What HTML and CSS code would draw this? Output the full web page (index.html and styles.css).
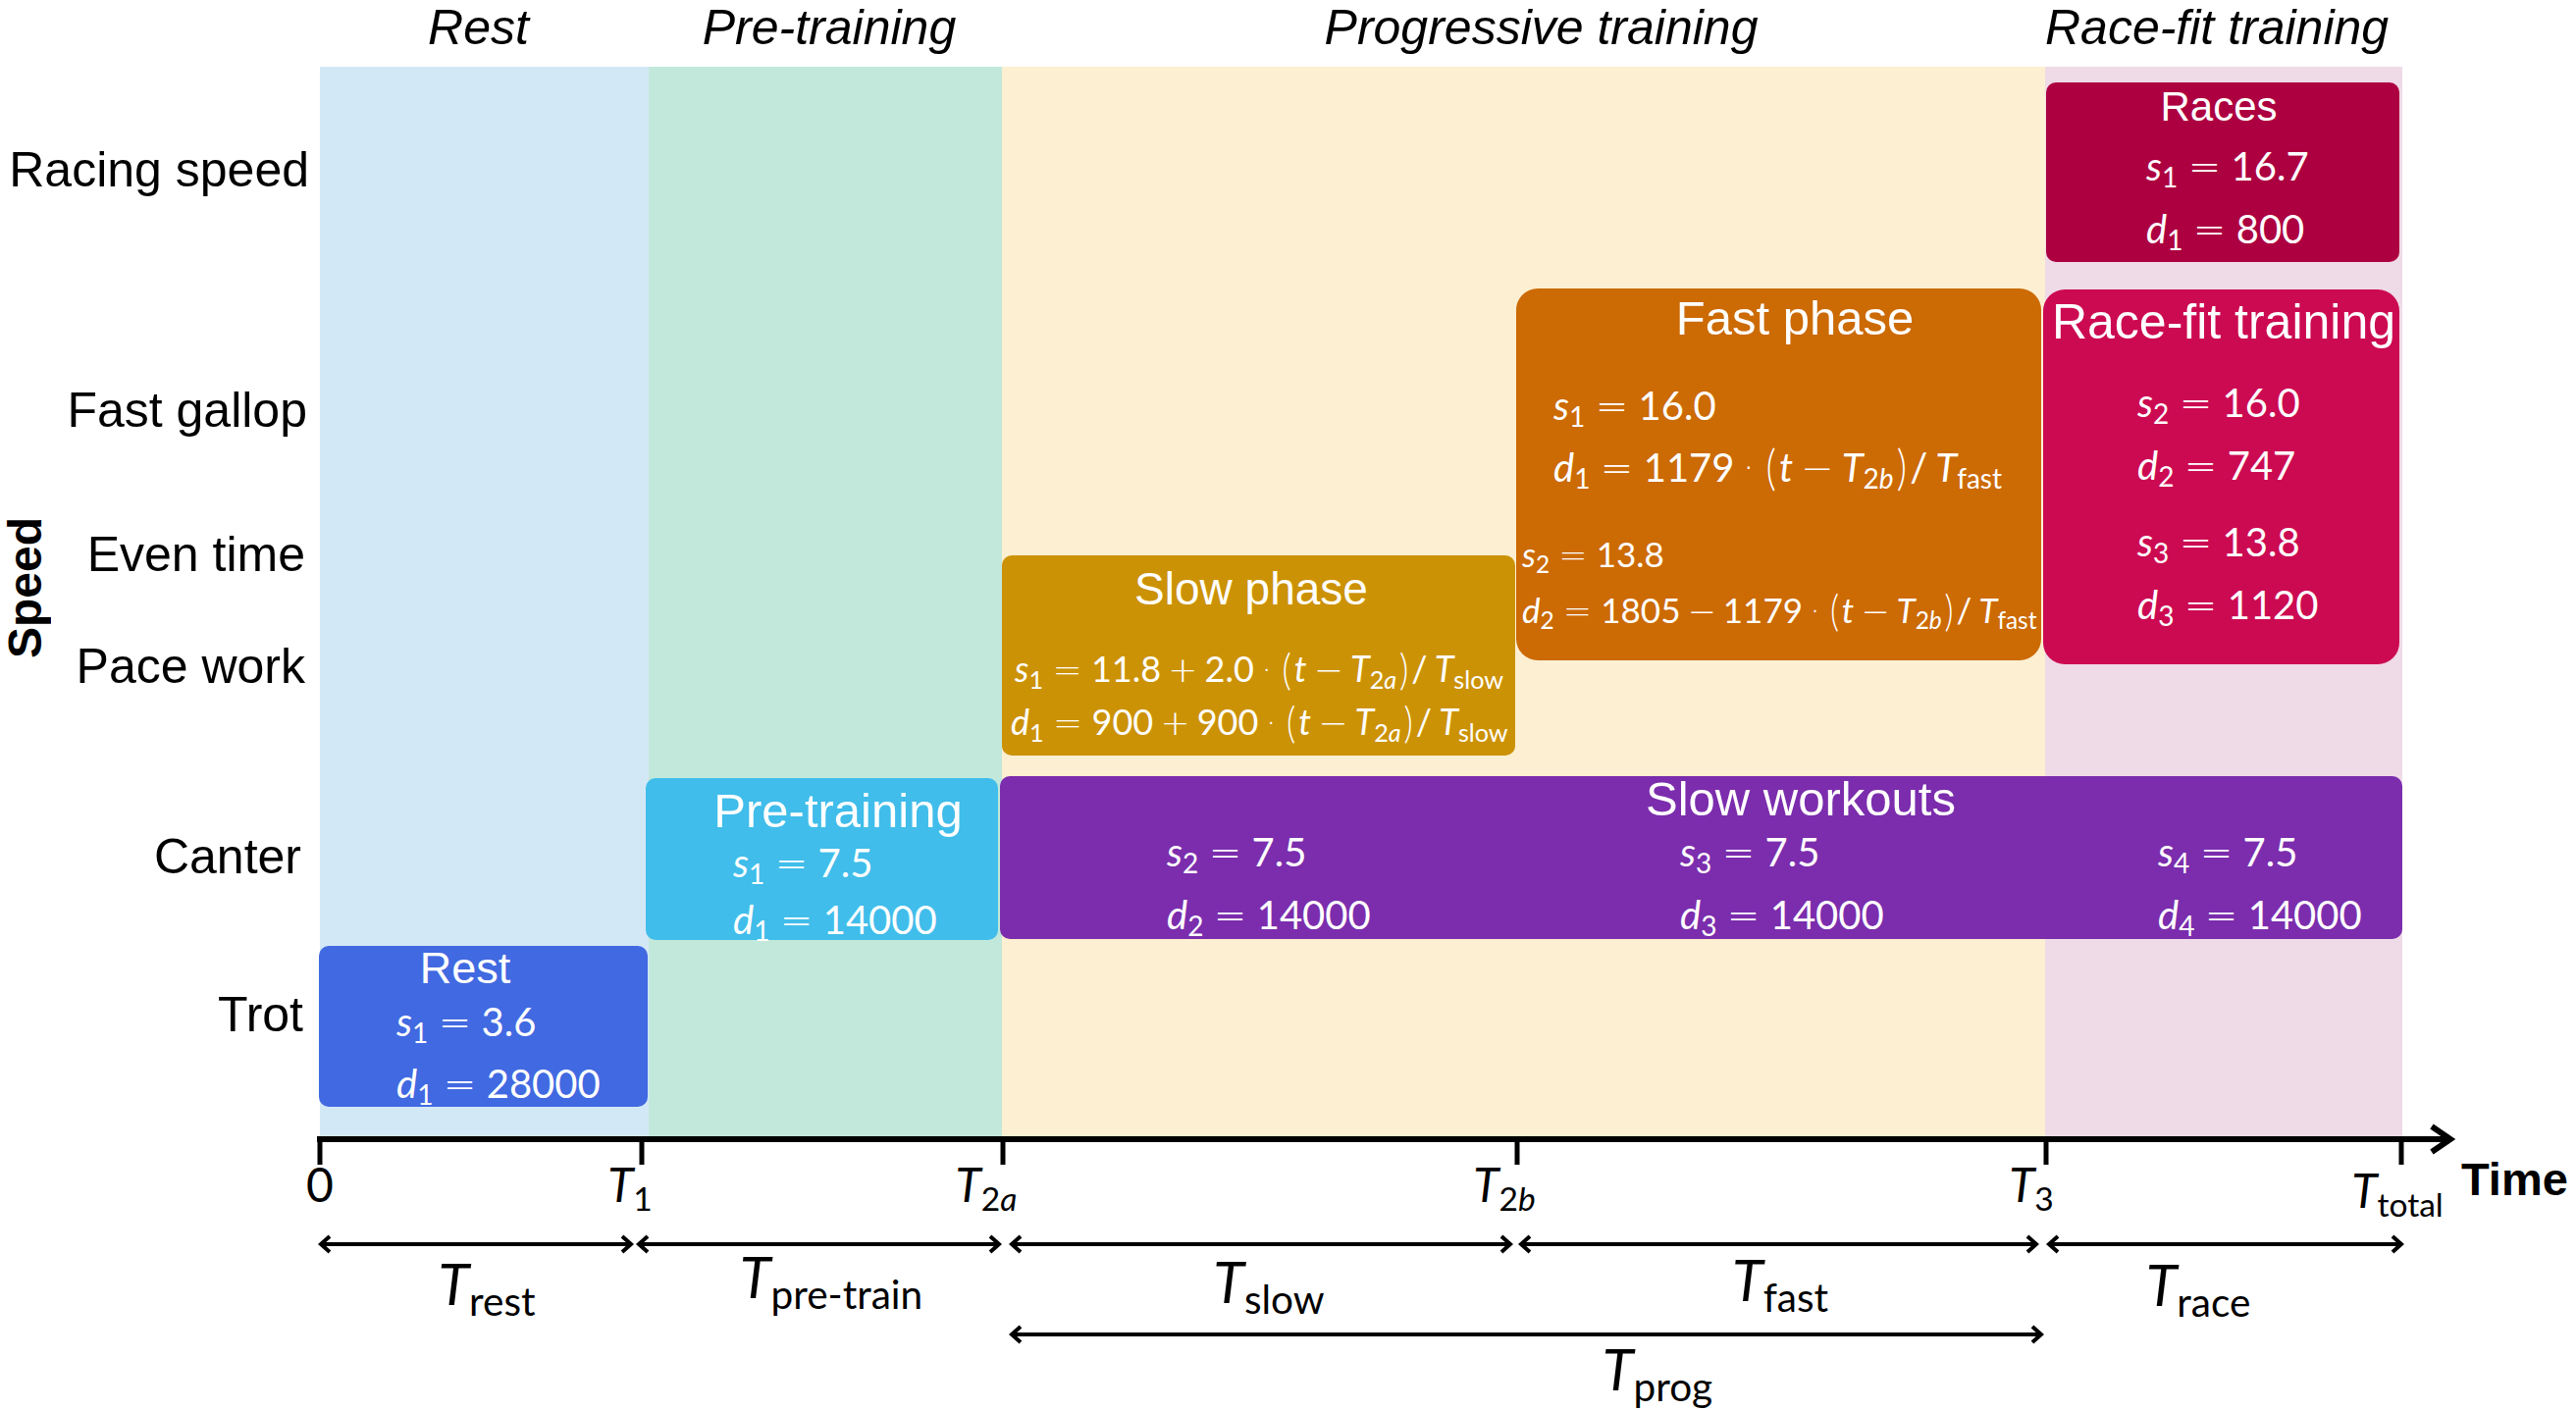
FILE: index.html
```html
<!DOCTYPE html>
<html lang="en">
<head>
<meta charset="utf-8">
<title>Training phases</title>
<link rel="stylesheet" href="styles.css">
</head>
<body>
<div class="figure">
  <div class="phase-titles">
    <div class="pt pt-rest">Rest</div>
    <div class="pt pt-pre">Pre-training</div>
    <div class="pt pt-prog">Progressive training</div>
    <div class="pt pt-race">Race-fit training</div>
  </div>

  <div class="yaxis">
    <div class="yaxis-title">Speed</div>
    <div class="ytick yt-racing">Racing speed</div>
    <div class="ytick yt-fast">Fast gallop</div>
    <div class="ytick yt-even">Even time</div>
    <div class="ytick yt-pace">Pace work</div>
    <div class="ytick yt-canter">Canter</div>
    <div class="ytick yt-trot">Trot</div>
  </div>

  <div class="plot">
    <div class="bands">
      <div class="band band-rest"></div>
      <div class="band band-pre"></div>
      <div class="band band-prog"></div>
      <div class="band band-race"></div>
    </div>

    <div class="box box-rest">
      <div class="bt">Rest</div>
      <div class="m"><i>s</i><sub>1</sub><span class="op">=</span>3.6</div>
      <div class="m"><i>d</i><sub>1</sub><span class="op">=</span>28000</div>
    </div>

    <div class="box box-pre">
      <div class="bt">Pre-training</div>
      <div class="m"><i>s</i><sub>1</sub><span class="op">=</span>7.5</div>
      <div class="m"><i>d</i><sub>1</sub><span class="op">=</span>14000</div>
    </div>

    <div class="box box-slow">
      <div class="bt">Slow phase</div>
      <div class="m m-first"><i>s</i><sub>1</sub><span class="op">=</span>11.8<span class="bin">+</span>2.0<span class="dot">·</span><span class="pr">(</span><i>t</i><span class="bin">−</span><i>T</i><sub>2<i>a</i></sub><span class="pr">)</span>/<i class="sl">T</i><sub>slow</sub></div>
      <div class="m m-d"><i>d</i><sub>1</sub><span class="op">=</span>900<span class="bin">+</span>900<span class="dot">·</span><span class="pr">(</span><i>t</i><span class="bin">−</span><i>T</i><sub>2<i>a</i></sub><span class="pr">)</span>/<i class="sl">T</i><sub>slow</sub></div>
    </div>

    <div class="box box-fast">
      <div class="bt">Fast phase</div>
      <div class="m m-first"><i>s</i><sub>1</sub><span class="op">=</span>16.0</div>
      <div class="m"><i>d</i><sub>1</sub><span class="op">=</span>1179<span class="dot">·</span><span class="pr">(</span><i>t</i><span class="bin">−</span><i>T</i><sub>2<i>b</i></sub><span class="pr">)</span>/<i class="sl">T</i><sub>fast</sub></div>
      <div class="m m-small m-small-first"><i>s</i><sub>2</sub><span class="op">=</span>13.8</div>
      <div class="m m-small"><i>d</i><sub>2</sub><span class="op">=</span>1805<span class="bin">−</span>1179<span class="dot">·</span><span class="pr">(</span><i>t</i><span class="bin">−</span><i>T</i><sub>2<i>b</i></sub><span class="pr">)</span>/<i class="sl">T</i><sub>fast</sub></div>
    </div>

    <div class="box box-races">
      <div class="bt">Races</div>
      <div class="m m-first"><i>s</i><sub>1</sub><span class="op">=</span>16.7</div>
      <div class="m"><i>d</i><sub>1</sub><span class="op">=</span>800</div>
    </div>

    <div class="box box-racefit">
      <div class="bt">Race-fit training</div>
      <div class="m m-first"><i>s</i><sub>2</sub><span class="op">=</span>16.0</div>
      <div class="m"><i>d</i><sub>2</sub><span class="op">=</span>747</div>
      <div class="m m-second"><i>s</i><sub>3</sub><span class="op">=</span>13.8</div>
      <div class="m"><i>d</i><sub>3</sub><span class="op">=</span>1120</div>
    </div>

    <div class="box box-workouts">
      <div class="bt">Slow workouts</div>
      <div class="cols">
        <div class="col">
          <div class="m"><i>s</i><sub>2</sub><span class="op">=</span>7.5</div>
          <div class="m"><i>d</i><sub>2</sub><span class="op">=</span>14000</div>
        </div>
        <div class="col">
          <div class="m"><i>s</i><sub>3</sub><span class="op">=</span>7.5</div>
          <div class="m"><i>d</i><sub>3</sub><span class="op">=</span>14000</div>
        </div>
        <div class="col">
          <div class="m"><i>s</i><sub>4</sub><span class="op">=</span>7.5</div>
          <div class="m"><i>d</i><sub>4</sub><span class="op">=</span>14000</div>
        </div>
      </div>
    </div>
  </div>

  <div class="xaxis">
    <svg class="axis-svg" width="2625" height="279" viewBox="0 1158 2625 279" aria-hidden="true">
      <g stroke="#000" fill="none" stroke-linecap="butt" stroke-linejoin="miter">
        <path d="M323 1161 H2494" stroke-width="6"/>
        <path d="M2478 1148 L2497 1161 L2478 1174" stroke-width="6"/>
        <path d="M326 1161 V1187 M654 1161 V1187 M1022 1161 V1187 M1546 1161 V1187 M2085 1161 V1187 M2447 1161 V1187" stroke-width="5"/>
        <g stroke-width="4">
          <path d="M327 1268 H643 M336 1260 L327 1268 L336 1276 M634 1260 L643 1268 L634 1276"/>
          <path d="M651 1268 H1018 M660 1260 L651 1268 L660 1276 M1009 1260 L1018 1268 L1009 1276"/>
          <path d="M1031 1268 H1539 M1040 1260 L1031 1268 L1040 1276 M1530 1260 L1539 1268 L1530 1276"/>
          <path d="M1550 1268 H2075 M1559 1260 L1550 1268 L1559 1276 M2066 1260 L2075 1268 L2066 1276"/>
          <path d="M2088 1268 H2447 M2097 1260 L2088 1268 L2097 1276 M2438 1260 L2447 1268 L2438 1276"/>
          <path d="M1031 1360 H2080 M1040 1352 L1031 1360 L1040 1368 M2071 1352 L2080 1360 L2071 1368"/>
        </g>
      </g>
    </svg>
    <div class="xt xt-0">0</div>
    <div class="xt xt-1"><i>T</i><sub>1</sub></div>
    <div class="xt xt-2a"><i>T</i><sub>2<i>a</i></sub></div>
    <div class="xt xt-2b"><i>T</i><sub>2<i>b</i></sub></div>
    <div class="xt xt-3"><i>T</i><sub>3</sub></div>
    <div class="xt xt-total"><i>T</i><sub>total</sub></div>
    <div class="xaxis-title">Time</div>

    <div class="span-label sl-rest"><i>T</i><sub>rest</sub></div>
    <div class="span-label sl-pre"><i>T</i><sub>pre-train</sub></div>
    <div class="span-label sl-slow"><i>T</i><sub>slow</sub></div>
    <div class="span-label sl-fast"><i>T</i><sub>fast</sub></div>
    <div class="span-label sl-race"><i>T</i><sub>race</sub></div>
    <div class="span-label sl-prog"><i>T</i><sub>prog</sub></div>
  </div>
</div>
</body>
</html>
```

FILE: styles.css
```css
html, body {
  margin: 0;
  padding: 0;
  background: #ffffff;
}

body {
  font-family: "Liberation Sans", Arial, sans-serif;
  color: #000;
}

.figure {
  width: 2625px;
  height: 1437px;
  display: grid;
  grid-template-columns: 326px 2122px 177px;
  grid-template-rows: 68px 1090px 279px;
}

/* ---------- phase titles ---------- */
.phase-titles {
  grid-column: 2;
  grid-row: 1;
  display: flex;
}

.pt {
  font-style: italic;
  font-size: 50px;
  line-height: 56px;
  text-align: center;
  white-space: nowrap;
  box-sizing: border-box;
}

.pt-rest { width: 335px; padding-right: 12px; }
.pt-pre  { width: 360px; padding-left: 8px; }
.pt-prog { width: 1063px; padding-left: 36px; }
.pt-race { width: 364px; padding-right: 16px; }

/* ---------- y axis ---------- */
.yaxis {
  grid-column: 1;
  grid-row: 2;
  position: relative;
}

.yaxis-title {
  position: absolute;
  left: 0;
  top: 459px;
  writing-mode: vertical-rl;
  transform: rotate(180deg);
  font-weight: bold;
  font-size: 48px;
  line-height: 52px;
  white-space: nowrap;
}

.ytick {
  position: absolute;
  font-size: 50px;
  line-height: 50px;
  white-space: nowrap;
}

.yt-racing { top: 80px;  right: 11px; }
.yt-fast   { top: 325px; right: 13px; }
.yt-even   { top: 472px; right: 15px; }
.yt-pace   { top: 586px; right: 15px; }
.yt-canter { top: 780px; right: 19px; }
.yt-trot   { top: 941px; right: 17px; }

/* ---------- plot ---------- */
.plot {
  grid-column: 2;
  grid-row: 2;
  position: relative;
}

.bands {
  display: flex;
  height: 100%;
}

.band { height: 100%; }
.band-rest { width: 335px;  background: #d3e8f6; }
.band-pre  { width: 360px;  background: #c2e8dc; }
.band-prog { width: 1063px; background: #fdefd1; }
.band-race { width: 364px;  background: #efdbe7; }

/* ---------- boxes (diagram nodes) ---------- */
.box {
  position: absolute;
  box-sizing: border-box;
  color: #ffffff;
  border-radius: 10px;
  display: flex;
  flex-direction: column;
}

.bt {
  font-family: "Liberation Sans", Arial, sans-serif;
  text-align: center;
  white-space: nowrap;
}

.m {
  font-family: Lato, "Open Sans", sans-serif;
  font-size: 40px;
  white-space: nowrap;
}

.m i, .xt i, .span-label i {
  font-style: italic;
}

.m sub, .xt sub, .span-label sub {
  font-size: 0.7em;
  vertical-align: -0.26em;
  line-height: 0;
}

.op, .bin, .dot {
  font-family: "DejaVu Sans", sans-serif;
  font-weight: 300;
}
.op  { margin: 0 0.26em; }
.bin { margin: 0 0.2em; }
.dot { margin: 0 0.2em; }
.sl  { margin-left: 0.2em; }
.pr {
  display: inline-block;
  transform: scaleY(1.22);
  font-weight: 300;
  margin: 0 0.08em;
}

/* rest */
.box-rest {
  left: -1px; top: 896px; width: 335px; height: 164px;
  background: #4169e1;
}
.box-rest .bt { font-size: 45px; line-height: 46px; padding-right: 37px; }
.box-rest .m  { line-height: 62px; padding-left: 79px; }

/* pre-training */
.box-pre {
  left: 332px; top: 725px; width: 359px; height: 165px;
  padding-top: 8px;
  background: #40bdea;
}
.box-pre .bt { font-size: 49px; line-height: 50px; padding-left: 33px; }
.box-pre .m  { line-height: 57px; padding-left: 89px; }

/* slow phase */
.box-slow {
  left: 695px; top: 498px; width: 523px; height: 204px;
  padding-top: 10px;
  background: #cc9206;
}
.box-slow .bt { font-size: 46px; line-height: 48px; padding-right: 15px; }
.box-slow .m  { line-height: 53px; padding-left: 13px; font-size: 36px; }
.box-slow .m-d { padding-left: 9px; }
.box-slow .m-first { margin-top: 31px; }

/* fast phase */
.box-fast {
  left: 1219px; top: 226px; width: 535px; height: 379px;
  padding-top: 6px;
  border-radius: 22px;
  background: #cc6a04;
}
.box-fast .bt { font-size: 49px; line-height: 48px; padding-left: 33px; }
.box-fast .m  { line-height: 62px; padding-left: 38px; }
.box-fast .m-first { margin-top: 34px; }
.box-fast .m-small { font-size: 35px; line-height: 55px; padding-left: 6px; }
.box-fast .m-small-first { margin-top: 29px; }

/* races */
.box-races {
  left: 1759px; top: 16px; width: 360px; height: 183px;
  padding-top: 3px;
  background: #ad0040;
}
.box-races .bt { font-size: 42px; line-height: 44px; padding-right: 8px; }
.box-races .m  { line-height: 63px; padding-left: 102px; }
.box-races .m-first { margin-top: 7px; }

/* race-fit training */
.box-racefit {
  left: 1756px; top: 227px; width: 363px; height: 382px;
  padding-top: 8px;
  border-radius: 22px;
  background: #cc0a52;
}
.box-racefit .bt { font-size: 50px; line-height: 50px; padding-left: 5px; }
.box-racefit .m  { line-height: 63px; padding-left: 96px; }
.box-racefit .m-first { margin-top: 26px; }
.box-racefit .m-second { margin-top: 14px; }

/* slow workouts */
.box-workouts {
  left: 693px; top: 723px; width: 1429px; height: 166px;
  background: #7b2dad;
}
.box-workouts .bt { font-size: 49px; line-height: 46px; padding-left: 203px; }
.cols {
  display: grid;
  grid-template-columns: 523px 487px 1fr;
  padding-left: 170px;
}
.col .m { line-height: 63px; }

/* ---------- x axis ---------- */
.xaxis {
  grid-column: 1 / -1;
  grid-row: 3;
  position: relative;
}

.axis-svg {
  position: absolute;
  left: 0;
  top: 0;
  overflow: visible;
}

.xt {
  position: absolute;
  font-family: Lato, "Open Sans", sans-serif;
  font-size: 48px;
  line-height: 48px;
  white-space: nowrap;
  transform: translateX(-50%);
  top: 25px;
}

.xt-0     { left: 326px; }
.xt-1     { left: 642px; }
.xt-2a    { left: 1005px; }
.xt-2b    { left: 1533px; }
.xt-3     { left: 2070px; }
.xt-total { left: 2443px; top: 31px; }

.xaxis-title {
  position: absolute;
  left: 2508px;
  top: 20px;
  font-weight: bold;
  font-size: 47px;
  line-height: 47px;
  white-space: nowrap;
}

.span-label {
  position: absolute;
  font-family: Lato, "Open Sans", sans-serif;
  font-size: 58px;
  line-height: 58px;
  white-space: nowrap;
  transform: translateX(-50%);
}

.sl-rest { left: 496px;  top: 121px; }
.sl-pre  { left: 847px;  top: 114px; }
.sl-slow { left: 1293px; top: 119px; }
.sl-fast { left: 1814px; top: 117px; }
.sl-race { left: 2240px; top: 122px; }
.sl-prog { left: 1689px; top: 208px; }
```
